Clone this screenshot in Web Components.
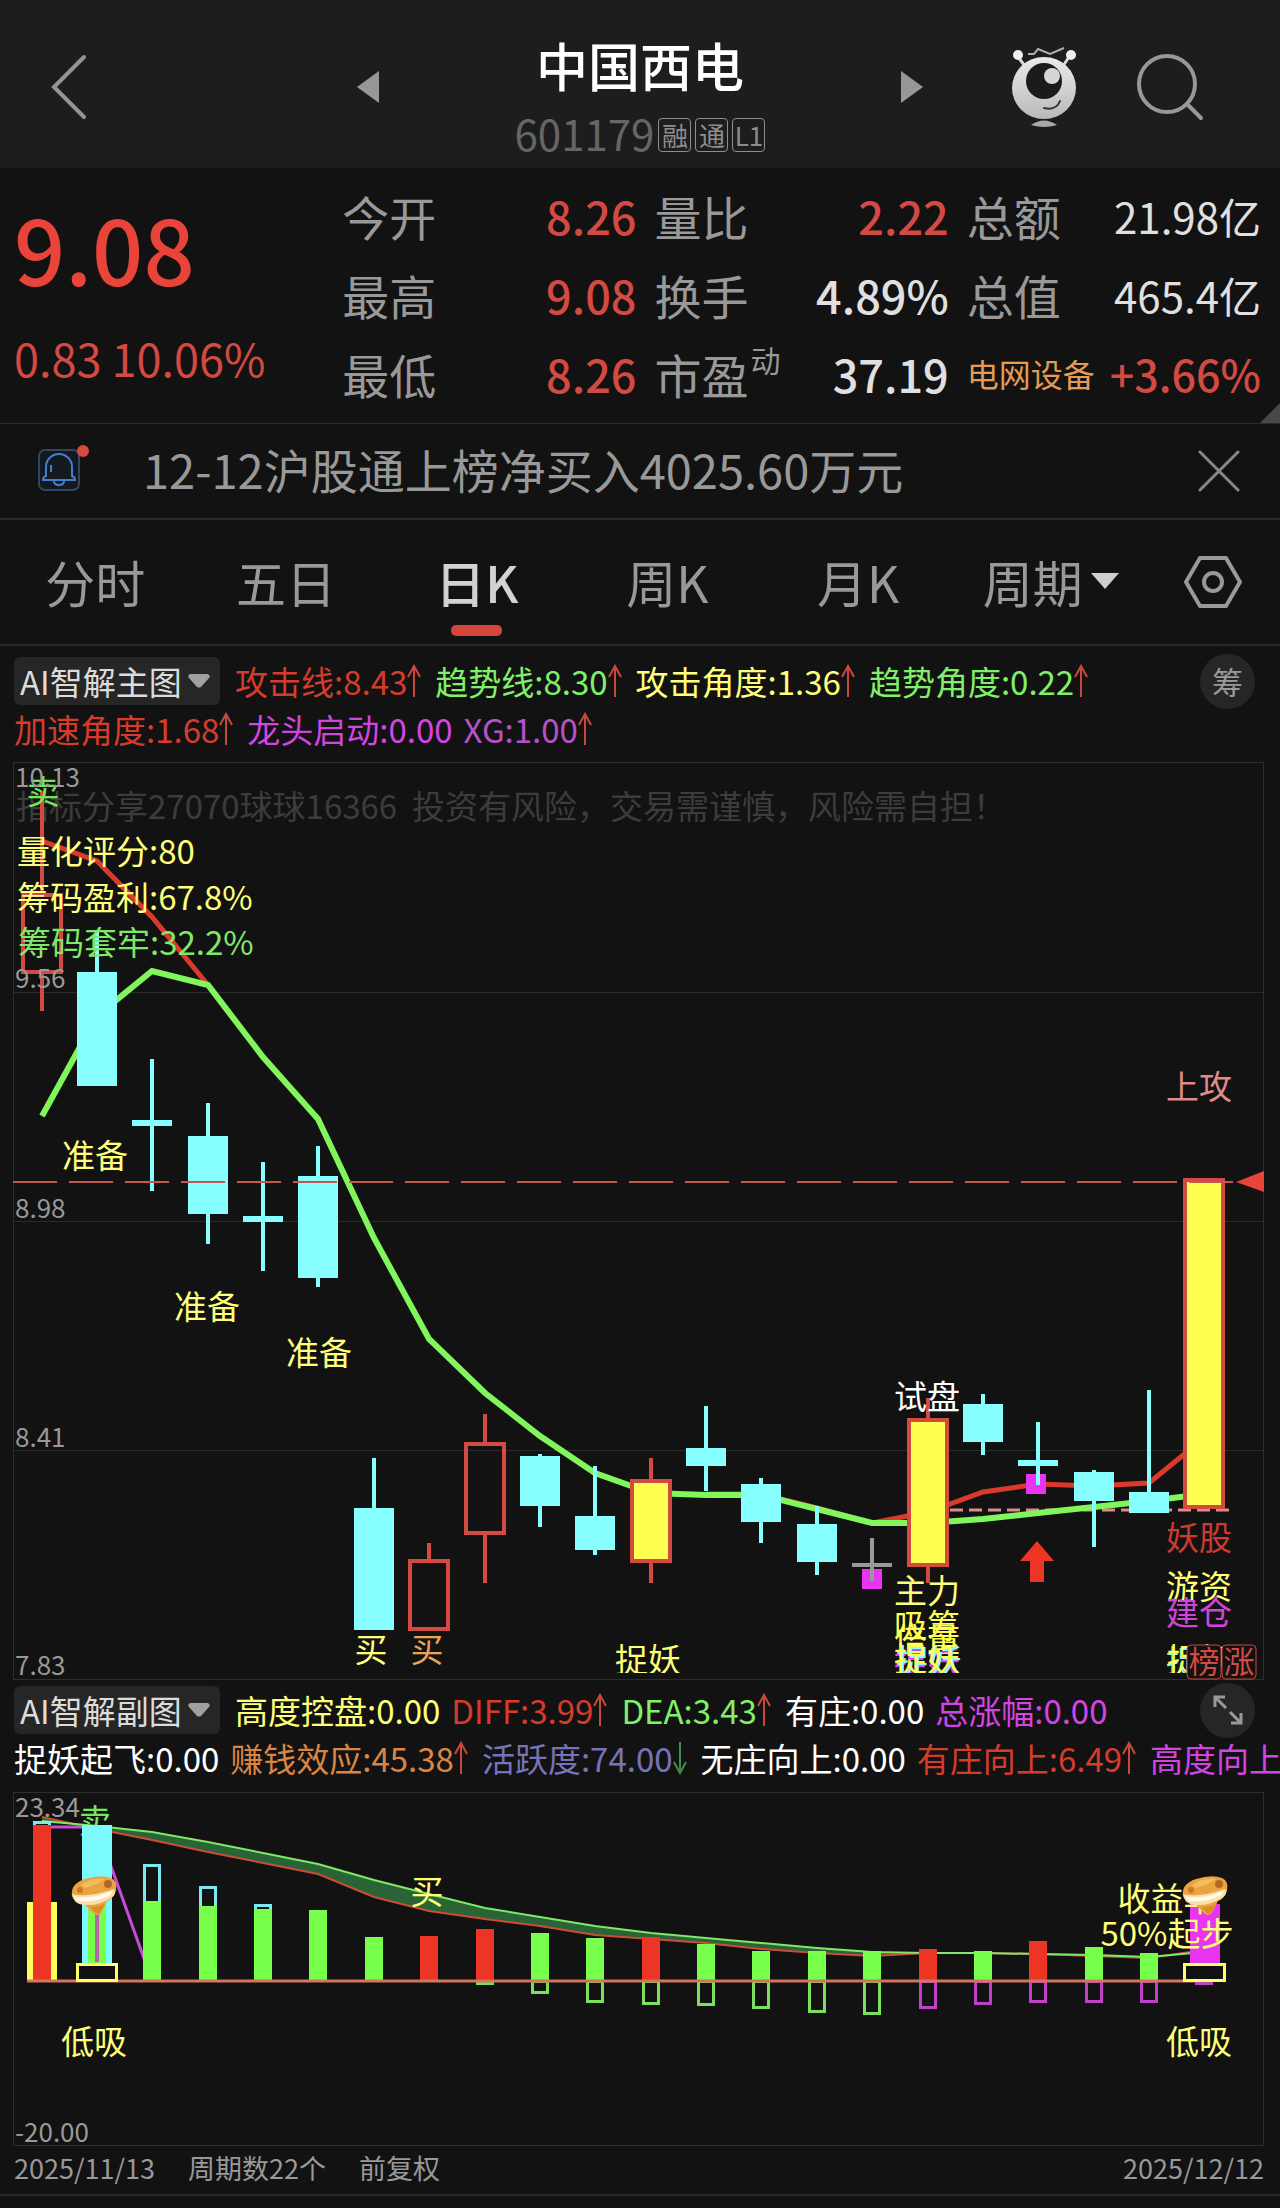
<!DOCTYPE html>
<html lang="zh-CN">
<head>
<meta charset="utf-8">
<meta name="viewport" content="width=device-width, initial-scale=1">
<title>中国西电 601179</title>
<style>
  html {
    background: #121212;
  }

  body {
    margin: 0;
    background: #121212;
    color: #e0e0e0;
    font-family: "Noto Sans CJK SC", "Noto Sans", sans-serif;
    --red: #d24a41;
    --grey: #999;
    --line: #2a2a2a;
    overflow-x: hidden;
  }
</style>
</head>
<body>
<stock-page></stock-page>

<script>
class BaseElement extends HTMLElement {
  constructor() {
    super()
    this.attachShadow({ mode: "open" })
    this.shadowRoot.innerHTML = `<style>
      :host { display: block; box-sizing: border-box; }
      * { box-sizing: border-box; }
      button, select, a { font: inherit; color: inherit; background: none; border: 0; padding: 0; margin: 0; text-decoration: none; cursor: pointer; }
      select { appearance: none; outline: none; }
      svg { display: block; }
    </style>${this.css}${this.html}`
  }

  get css() { return '' }
  get html() { return '<slot></slot>' }
}

customElements.define('stock-header', class extends BaseElement {
  get css() {
    return /*html*/`
      <style>
        header {
          display: grid;
          grid-template-columns: 3fr 4fr 3fr;
          min-height: 168px;
          background: #1d1d1d;
        }
        .side { display: flex; align-items: center; padding-top: 6px; }
        .left { justify-content: space-between; padding-left: 50px; padding-right: 5px; }
        .right { padding-left: 5px; padding-right: 76px; }
        .robot { margin-left: auto; margin-right: 59px; }
        .middle { padding-top: 33px; text-align: center; }
        h1 { margin: 0; font-size: 52px; line-height: 64px; font-weight: 500; color: #fff; }
        .code {
          display: flex;
          justify-content: center;
          align-items: center;
          gap: 4px;
          margin-top: 19px;
          font-size: 42px;
          line-height: 34px;
          color: #666;
        }
        .number { padding-bottom: 4px; }
        .tag {
          width: 33px;
          height: 34px;
          border: 1px solid #8e8e8e;
          border-radius: 4px;
          font-size: 26px;
          line-height: 31px;
          color: #8e8e8e;
        }
      </style>
    `
  }

  get html() {
    return /*html*/`
      <header>
        <div class="side left">
          <button aria-label="返回">
            <svg width="38" height="66" viewBox="0 0 38 66" fill="none" stroke="#949494" stroke-width="4" stroke-linecap="round"><path d="M34 3 4 33l30 30"/></svg>
          </button>
          <button aria-label="上一只">
            <svg width="22" height="34" viewBox="0 0 22 34" fill="#979797"><path d="M22 1v32L0 17z"/></svg>
          </button>
        </div>
        <div class="middle">
          <h1>中国西电</h1>
          <div class="code"><span class="number">601179</span><span class="tag">融</span><span class="tag">通</span><span class="tag">L1</span></div>
        </div>
        <div class="side right">
          <button aria-label="下一只">
            <svg width="22" height="34" viewBox="0 0 22 34" fill="#979797"><path d="M0 1v32l22-16z"/></svg>
          </button>
          <button class="robot" aria-label="智能助手">
            <svg width="66" height="82" viewBox="0 0 66 82">
              <defs>
                <linearGradient id="body" x1="0" y1="0" x2="0" y2="1">
                  <stop offset="0" stop-color="#ebebeb"/><stop offset="1" stop-color="#b9b9b9"/>
                </linearGradient>
              </defs>
              <g stroke="#d8d8d8" fill="none">
                <path d="M7 11l7 9M58 11l-6 9" stroke-width="3"/>
                <path d="M17 8h6l4-5 12 5 14-6" stroke-width="2" stroke="#b0b0b0"/>
              </g>
              <circle cx="7" cy="9" r="5" fill="#eee"/>
              <circle cx="60" cy="9" r="5" fill="#eee"/>
              <ellipse cx="33" cy="42" rx="32" ry="31" fill="url(#body)"/>
              <circle cx="33" cy="35" r="18" fill="#1b1b1b"/>
              <circle cx="41" cy="30" r="8" fill="#d6d6d6"/>
              <path d="M33 62q12 3 16-7" fill="none" stroke="#333" stroke-width="2" stroke-linecap="round"/>
              <path d="M20 79q13-9 26 0-13 4-26 0z" fill="#a8a8a8"/>
            </svg>
          </button>
          <button aria-label="搜索">
            <svg width="68" height="68" viewBox="0 0 68 68" fill="none" stroke="#989898" stroke-width="4" stroke-linecap="round"><circle cx="31" cy="31" r="28"/><path d="M51 51l14 14"/></svg>
          </button>
        </div>
      </header>
    `
  }
})

customElements.define('quote-panel', class extends BaseElement {
  get css() {
    return /*html*/`
      <style>
        :host { position: relative; border-bottom: 1px solid var(--line); }
        .panel {
          display: grid;
          grid-template-columns: 328fr 918fr;
          padding: 8px 19px 10px 14px;
          font-size: 47px;
          line-height: 79px;
        }
        .now { display: flex; flex-direction: column; gap: 36px; padding-top: 21px; color: var(--red); }
        .price { font-size: 90px; line-height: 100px; font-weight: 500; color: #e8443a; }
        .change { font-size: 45px; line-height: 50px; white-space: pre; }
        dl {
          display: grid;
          grid-auto-flow: column;
          grid-template-rows: repeat(3, 79px);
          grid-auto-columns: 1fr;
          column-gap: 18px;
          margin: 0;
        }
        dl div { display: flex; justify-content: space-between; white-space: nowrap; }
        dt { color: var(--grey); }
        dd { margin: 0; font-size: 45px; font-weight: 500; }
        .up { color: var(--red); }
        sup { font-size: 30px; line-height: 30px; vertical-align: 22px; margin-left: 2px; }
        .sector { font-size: 32px; color: #e39b55; }
        .amount { font-size: 42px; font-weight: 400; }
        .gain { font-size: 43px; }
        .corner { position: absolute; right: 0; bottom: 0; }
      </style>
    `
  }

  get html() {
    return /*html*/`
      <section class="panel">
        <div class="now">
          <div class="price">9.08</div>
          <div class="change">0.83 10.06%</div>
        </div>
        <dl>
          <div><dt>今开</dt><dd class="up">8.26</dd></div>
          <div><dt>最高</dt><dd class="up">9.08</dd></div>
          <div><dt>最低</dt><dd class="up">8.26</dd></div>
          <div><dt>量比</dt><dd class="up">2.22</dd></div>
          <div><dt>换手</dt><dd>4.89%</dd></div>
          <div><dt>市盈<sup>动</sup></dt><dd>37.19</dd></div>
          <div><dt>总额</dt><dd class="amount">21.98亿</dd></div>
          <div><dt>总值</dt><dd class="amount">465.4亿</dd></div>
          <div><dt class="sector">电网设备</dt><dd class="up gain">+3.66%</dd></div>
        </dl>
      </section>
      <svg class="corner" width="20" height="20" viewBox="0 0 20 20"><path d="M20 0v20H0z" fill="#484848"/></svg>
    `
  }
})

customElements.define('notice-bar', class extends BaseElement {
  get css() {
    return /*html*/`
      <style>
        :host {
          display: flex;
          align-items: center;
          height: 96px;
          padding: 0 40px 0 38px;
          border-bottom: 2px solid var(--line);
          font-size: 47px;
          line-height: 90px;
          color: var(--grey);
        }
        .bell { margin-right: 53px; margin-bottom: 6px; }
        a { flex: 1; padding-bottom: 4px; }
      </style>
    `
  }

  get html() {
    return /*html*/`
      <svg class="bell" width="52" height="48" viewBox="0 0 52 48" fill="none">
        <rect x="1" y="6" width="40" height="40" rx="6" stroke="#34465f" stroke-width="2" fill="#14181f"/>
        <g stroke="#3f7fce" stroke-width="2">
          <path d="M8 32V23a13 13 0 0 1 26 0v9q3 1 3 4H5q0-3 3-4zM13 21v7"/>
          <path d="M16 37q0 4 5 4t5-4"/>
        </g>
        <circle cx="45" cy="7" r="6" fill="#d24a41"/>
      </svg>
      <a href="#notice"><slot></slot></a>
      <button aria-label="关闭">
        <svg width="42" height="42" viewBox="0 0 42 42" stroke="#888" stroke-width="3" stroke-linecap="round"><path d="M2 2l38 38M40 2 2 40"/></svg>
      </button>
    `
  }
})

customElements.define('period-tabs', class extends BaseElement {
  get css() {
    return /*html*/`
      <style>
        nav {
          display: flex;
          height: 126px;
          border-bottom: 2px solid var(--line);
          font-size: 50px;
          line-height: 122px;
          color: var(--grey);
        }
        .tab { position: relative; flex: 191 1 0; padding-bottom: 2px; text-align: center; }
        .on { color: #d2d2d2; font-weight: 500; }
        .on::after {
          content: "";
          position: absolute;
          left: 50%;
          bottom: 8px;
          width: 51px;
          height: 11px;
          margin-left: -26px;
          border-radius: 5px;
          background: #d6443e;
        }
        .more { display: flex; align-items: center; justify-content: center; gap: 8px; padding-left: 2px; }
        .gear { flex: 134 1 0; display: flex; align-items: center; justify-content: center; }
      </style>
    `
  }

  get html() {
    return /*html*/`
      <nav>
        <button class="tab">分时</button>
        <button class="tab">五日</button>
        <button class="tab on" aria-current="true">日K</button>
        <button class="tab">周K</button>
        <button class="tab">月K</button>
        <label class="tab more">
          <select aria-label="周期"><option>周期</option></select>
          <svg width="28" height="16" viewBox="0 0 28 16" fill="#cfcfcf"><path d="M0 0h28L14 16z"/></svg>
        </label>
        <button class="gear" aria-label="设置">
          <svg width="58" height="52" viewBox="0 0 58 52" fill="none" stroke="#999" stroke-width="4" stroke-linejoin="round"><path d="M16 2h26l14 24-14 24H16L2 26z"/><circle cx="29" cy="26" r="9"/></svg>
        </button>
      </nav>
    `
  }
})

/* A name:value pair with an optional trend arrow */
customElements.define('legend-item', class extends BaseElement {
  get css() {
    return /*html*/`
      <style>
        :host { display: flex; align-items: center; flex: none; white-space: nowrap; }
        svg { display: none; fill: none; stroke-width: 2; }
        :host([trend]) svg { display: block; margin-right: 3px; }
        :host([trend="up"]) svg { stroke: #c9483c; }
        :host([trend="down"]) svg { stroke: #438c4c; transform: rotate(180deg); }
      </style>
    `
  }

  get html() {
    return /*html*/`<span><slot></slot></span><svg width="14" height="34" viewBox="0 0 14 34"><path d="M7 33V3M1 13 7 2l6 11"/></svg>`
  }
})

customElements.define('indicator-legend', class extends BaseElement {
  get css() {
    return /*html*/`
      <style>
        :host { padding: 11px 0 9px; font-size: 33px; line-height: 48px; overflow: hidden; }
        :host([compact]) { padding: 6px 0 10px; }
        .row { display: flex; align-items: center; height: 48px; padding: 0 25px 0 14px; }
        .items { display: flex; gap: 11px; }
        .pick {
          display: flex;
          align-items: center;
          gap: 6px;
          height: 48px;
          margin-right: 15px;
          padding: 0 10px 0 6px;
          border-radius: 6px;
          background: #262626;
          color: #dcdcdc;
        }
      </style>
    `
  }

  get html() {
    return /*html*/`
      <div class="row">
        <label class="pick">
          <select aria-label="指标"><option></option></select>
          <svg width="22" height="14" viewBox="0 0 22 14" fill="#a0a0a0"><path d="M2 0h18q3 2 1 4l-8 9q-2 1-4 0L1 4q-2-2 1-4z"/></svg>
        </label>
        <div class="items"><slot name="first"></slot></div>
        <slot name="action"></slot>
      </div>
      <div class="row"><div class="items"><slot></slot></div></div>
    `
  }

  connectedCallback() {
    this.shadowRoot.querySelector('option').textContent = this.getAttribute('name')
  }
})

/* ---- charts: both share one column grid of 22 days ---- */
const RED = '#d24a41'
const CYAN = '#88ffff'
const GREEN = '#80f55c'
const YELLOW = '#ffff52'
const TEXT_YELLOW = '#ffff7a'
const MAGENTA = '#e935f2'

const dayX = (i) => Math.round(41.5 + i * 55.38)

const rect = (x, y, w, h, fill, stroke, sw = 2) => stroke
  ? `<rect x="${x + sw / 2}" y="${y + sw / 2}" width="${w - sw}" height="${h - sw}" fill="${fill}" stroke="${stroke}" stroke-width="${sw}"/>`
  : `<rect x="${x}" y="${y}" width="${w}" height="${h}" fill="${fill}"/>`

const points = (ys, from = 0) => ys.map((y, i) => `${dayX(i + from)},${y}`).join(' ')

const polyline = (ys, color, width, from = 0) =>
  `<polyline points="${points(ys, from)}" fill="none" stroke="${color}" stroke-width="${width}"/>`

// y is the middle of the line of text
const label = (x, y, text, color, size = 33, anchor = 'middle') =>
  `<text x="${x}" y="${y + Math.round(size * 0.37)}" fill="${color}" font-size="${size}" text-anchor="${anchor}" xml:space="preserve">${text}</text>`

// [kind, high, top, bottom, low]
const candles = [
  ['hollow', 29, 131, 212, 249],
  ['down', 169, 210, 324, 324],
  ['cross', 297, 358, 364, 429],
  ['down', 341, 374, 452, 482],
  ['cross', 400, 454, 460, 509],
  ['down', 384, 414, 516, 525],
  ['down', 696, 746, 868, 868],
  ['hollow', 781, 797, 869, 869],
  ['hollow', 652, 680, 773, 821],
  ['down', 692, 694, 744, 765],
  ['down', 704, 754, 788, 793],
  ['strong', 696, 717, 801, 821],
  ['down', 644, 686, 704, 729],
  ['down', 716, 722, 760, 781],
  ['down', 744, 762, 800, 813],
  ['flat', 776, 801, 805, 819],
  ['strong', 636, 656, 805, 821],
  ['down', 632, 642, 680, 693],
  ['cross', 660, 698, 704, 723],
  ['down', 708, 710, 739, 785],
  ['down', 628, 730, 751, 751],
  ['strong', 416, 416, 747, 747],
]

const drawCandle = ([kind, high, top, bottom, low], i) => {
  const x = dayX(i)
  const color = { down: CYAN, cross: CYAN, flat: '#999', hollow: RED, strong: RED }[kind]
  const wick = (a, b) => b > a ? rect(x - 2, a, 4, b - a, color) : ''
  let body = rect(x - 20, top, 40, bottom - top, color)
  if (kind === 'hollow') body = rect(x - 21, top, 42, bottom - top, 'none', RED, 4)
  if (kind === 'strong') body = rect(x - 21, top, 42, bottom - top, YELLOW, RED, 4)
  return wick(high, top) + body + (kind === 'cross' || kind === 'flat' ? wick(top, bottom) : '') + wick(bottom, low)
}

customElements.define('k-chart', class extends BaseElement {
  get css() {
    return `<style>svg { width: 100%; height: auto; }</style>`
  }

  get html() {
    const trend = [354, 254, 209, 223, 295, 357, 476, 577, 631, 674, 711, 731, 733, 733, 747, 761, 761, 757, 751, 745, 739, 732]
    const grid = [230, 459, 688].map((y) => rect(14, y, 1249, 1, '#2a2a2a')).join('')
    const clip = (inner) => `<g clip-path="url(#plot)">${inner}</g>`
    return /*html*/`
      <svg viewBox="0 0 1280 918" role="img" aria-label="日K线图">
        <defs><clipPath id="plot"><rect x="0" y="0" width="1280" height="911"/></clipPath></defs>
        ${rect(13, 0, 1251, 918, 'none', '#2e2e2e', 1)}
        ${grid}
        ${label(16, 45, '指标分享27070球球16366  投资有风险，交易需谨慎，风险需自担！', '#3c3c3c', 33, 'start')}
        ${polyline([79, 99, 155, 223], '#d93a2b', 5)}
        ${polyline([732, 732, 746, 761, 750, 730, 722, 724, 721, 676], '#d93a2b', 5, 12)}
        <path d="M950 748h280" stroke="#e08a8a" stroke-width="3" stroke-dasharray="13 6"/>
        ${polyline(trend, GREEN, 6)}
        ${rect(862, 807, 20, 20, MAGENTA)}
        ${rect(1026, 712, 20, 20, MAGENTA)}
        ${candles.map(drawCandle).join('')}
        <path d="M13 420H1264" stroke="#c2574d" stroke-width="2" stroke-dasharray="44 12"/>
        <path d="M1236 420l28-11v21z" fill="#e8443a"/>
        <path d="M1037 779l17 20h-10v21h-14v-21h-10z" fill="#ec3524"/>

        ${label(43, 30, '卖', '#70e85a')}
        ${label(17, 90, '量化评分:80', TEXT_YELLOW, 33, 'start')}
        ${label(17, 136, '筹码盈利:67.8%', TEXT_YELLOW, 33, 'start')}
        ${label(18, 181, '筹码套牢:32.2%', '#80e868', 33, 'start')}
        ${label(95, 394, '准备', TEXT_YELLOW)}
        ${label(207, 545, '准备', TEXT_YELLOW)}
        ${label(319, 591, '准备', TEXT_YELLOW)}
        ${label(371, 888, '买', TEXT_YELLOW)}
        ${label(427, 888, '买', '#e8a555')}
        ${label(1199, 325, '上攻', '#e08a8a')}
        ${label(927, 635, '试盘', '#fff')}
        ${label(927, 829, '主力', TEXT_YELLOW)}
        ${label(1199, 776, '妖股', '#cf3a30')}
        ${label(1199, 825, '游资', TEXT_YELLOW)}
        ${label(1199, 851, '建仓', '#cf46d6')}
        ${clip(
          label(648, 898, '捉妖', TEXT_YELLOW) +
          label(927, 864, '吸筹', YELLOW) +
          label(927, 878, '倍量', YELLOW) +
          label(927, 901, '捉妖', MAGENTA) +
          label(929, 899, '捉妖', CYAN) +
          label(927, 897, '捉妖', YELLOW) +
          label(1199, 900, '捉妖', CYAN) +
          label(1200, 898, '捉妖', YELLOW)
        )}
        <g fill="#121212" stroke="#c9483c"><rect x="1187" y="883" width="34" height="34" rx="4"/><rect x="1222" y="883" width="34" height="34" rx="4"/></g>
        ${label(1204, 900, '榜', RED, 31)}
        ${label(1239, 900, '涨', RED, 31)}

        ${label(15, 15, '10.13', '#999', 26, 'start')}
        ${label(15, 216, '9.56', '#999', 26, 'start')}
        ${label(15, 446, '8.98', '#999', 26, 'start')}
        ${label(15, 675, '8.41', '#999', 26, 'start')}
        ${label(15, 903, '7.83', '#999', 26, 'start')}
      </svg>
    `
  }
})

// bar tops above the zero line; below is where the outline under it ends
const BAR_RED = '#ec3524'
const BAR_GREEN = '#78ff4c'
const bars = [
  { top: 33, color: BAR_RED, peak: 29 },
  { top: 112, color: BAR_GREEN },
  { top: 109, color: BAR_GREEN, peak: 72 },
  { top: 114, color: BAR_GREEN, peak: 94 },
  { top: 117, color: BAR_GREEN, peak: 112 },
  { top: 118, color: BAR_GREEN },
  { top: 145, color: BAR_GREEN },
  { top: 144, color: BAR_RED },
  { top: 137, color: BAR_RED, below: 192 },
  { top: 141, color: BAR_GREEN, below: 201 },
  { top: 146, color: BAR_GREEN, below: 210 },
  { top: 145, color: BAR_RED, below: 212 },
  { top: 152, color: BAR_GREEN, below: 213 },
  { top: 159, color: BAR_GREEN, below: 216 },
  { top: 159, color: BAR_GREEN, below: 220 },
  { top: 159, color: BAR_GREEN, below: 222 },
  { top: 157, color: BAR_RED, below: 216 },
  { top: 159, color: BAR_GREEN, below: 212 },
  { top: 149, color: BAR_RED, below: 210 },
  { top: 155, color: BAR_GREEN, below: 210 },
  { top: 161, color: BAR_GREEN, below: 210 },
]

customElements.define('sub-chart', class extends BaseElement {
  get css() {
    return `<style>svg { width: 100%; height: auto; }</style>`
  }

  get html() {
    const dea = [29, 34, 40, 50, 61, 72, 88, 102, 116, 125, 134, 141, 146, 151, 156, 160, 161, 161, 162, 163, 165, 160]
    const diff = [25, 37, 48, 60, 71, 82, 105, 119, 127, 134, 143, 147, 151, 157, 161, 164, 161, 161, 162, 164, 166, 158]
    const area = points(dea) + ' ' + points(diff).split(' ').reverse().join(' ')
    const zero = 190
    const drawBar = ({ top, color, peak, below }, i) => {
      const x = dayX(i) - 9
      return (below ? rect(x, zero - 2, 18, below - zero + 3, 'none', i < 16 ? '#7ae05e' : '#c040c8', 3) : '') +
        (peak ? rect(x, peak, 18, top - peak + 3, '#121212', '#7ce8f0', 3) : '') +
        rect(x, top, 18, zero - top, color)
    }
    const pan = (x) => /*html*/`
      <g transform="translate(${x} 84)">
        <path d="M1 20Q-1 8 14 3 30-2 40 2q7 3 5 13-3 8-9 10L30 37q-4 4-8 0L13 28Q3 26 1 20z" fill="#e9a441"/>
        <path d="M10 9q12-8 24-6-8 6-20 9z" fill="#f3bd5c"/>
        <path d="M1 18q16 4 42-5 3 5-3 9-12 8-27 7-11-1-12-11z" fill="#fbe0a4"/>
        <path d="M3 20q16 4 38-5l-1 4q-14 8-34 6z" fill="#fffaf0"/>
        <path d="M20 31q8 0 14-3l-5 9q-3 2-5-1z" fill="#dc8a2a"/>
        <circle cx="37" cy="8" r="4" fill="#b5672a"/><circle cx="9" cy="14" r="3" fill="#c97a28"/>
      </g>`
    return /*html*/`
      <svg viewBox="0 0 1280 354" role="img" aria-label="副图指标">
        ${rect(13, 0, 1251, 354, 'none', '#2e2e2e', 1)}
        ${label(95, 29, '卖', '#70e85a')}
        <polygon points="${area}" fill="#2a6436"/>
        ${polyline(diff, '#cc4c38', 2)}
        ${polyline(dea, '#80e868', 2)}
        <path d="M51 35h46l55 154" fill="none" stroke="#c64bd6" stroke-width="3"/>
        ${rect(27, 110, 30, 80, '#ffff5c')}
        ${rect(82, 33, 30, 138, '#7cfbff')}
        ${bars.map(drawBar).join('')}
        ${rect(95, 118, 4, 52, '#b565a8')}
        ${rect(1190, 112, 30, 60, MAGENTA)}
        <path d="M27 189H1204" stroke="#d2755c" stroke-width="3"/>
        ${rect(1195, 188, 18, 5, '#c040c8')}
        ${rect(76, 171, 42, 19, '#121212', '#ffff66', 3)}
        ${rect(1183, 171, 43, 19, '#121212', '#ffff66', 3)}

        ${label(427, 100, '买', TEXT_YELLOW)}
        ${label(94, 250, '低吸', TEXT_YELLOW)}
        ${label(1199, 250, '低吸', TEXT_YELLOW)}
        ${label(1167, 107, '收益率', TEXT_YELLOW)}
        ${label(1167, 142, '50%起步', TEXT_YELLOW)}
        ${pan(71)}
        ${pan(1182)}
        ${label(15, 15, '23.34', '#999', 26, 'start')}
        ${label(15, 340, '-20.00', '#999', 26, 'start')}
      </svg>
    `
  }
})

customElements.define('chart-footer', class extends BaseElement {
  get css() {
    return /*html*/`
      <style>
        footer {
          display: flex;
          gap: 33px;
          height: 50px;
          padding: 0 16px 0 14px;
          border-bottom: 2px solid var(--line);
          font-size: 27px;
          line-height: 43px;
          color: var(--grey);
        }
        .end { margin-left: auto; }
      </style>
    `
  }

  get html() {
    return /*html*/`
      <footer>
        <time>2025/11/13</time><span>周期数22个</span><span>前复权</span><time class="end">2025/12/12</time>
      </footer>
    `
  }
})

customElements.define('stock-page', class extends BaseElement {
  get css() {
    return /*html*/`
      <style>
        .red { color: #d63c2c; }
        .green { color: #80f068; }
        .yellow { color: #ffff7a; }
        .magenta { color: #d345e0; }
        .violet { color: #b552c8; }
        .orange { color: #d98545; }
        .blue { color: #7674b8; }
        .white { color: #fff; }
        .round {
          display: flex;
          flex: none;
          align-items: center;
          justify-content: center;
          width: 55px;
          height: 55px;
          margin-left: auto;
          border-radius: 50%;
          background: #262626;
          color: #999;
          font-size: 31px;
        }
      </style>
    `
  }

  get html() {
    return /*html*/`
      <stock-header></stock-header>
      <main>
        <quote-panel></quote-panel>
        <notice-bar>12-12沪股通上榜净买入4025.60万元</notice-bar>
        <period-tabs></period-tabs>

        <indicator-legend name="AI智解主图">
          <legend-item slot="first" class="red" trend="up">攻击线:8.43</legend-item>
          <legend-item slot="first" class="green" trend="up">趋势线:8.30</legend-item>
          <legend-item slot="first" class="yellow" trend="up">攻击角度:1.36</legend-item>
          <legend-item slot="first" class="green" trend="up">趋势角度:0.22</legend-item>
          <button class="round" slot="action">筹</button>
          <legend-item class="red" trend="up">加速角度:1.68</legend-item>
          <legend-item class="magenta">龙头启动:0.00</legend-item>
          <legend-item class="violet" trend="up">XG:1.00</legend-item>
        </indicator-legend>
        <k-chart></k-chart>

        <indicator-legend name="AI智解副图" compact>
          <legend-item slot="first" class="yellow">高度控盘:0.00</legend-item>
          <legend-item slot="first" class="red" trend="up">DIFF:3.99</legend-item>
          <legend-item slot="first" class="green" trend="up">DEA:3.43</legend-item>
          <legend-item slot="first" class="white">有庄:0.00</legend-item>
          <legend-item slot="first" class="magenta">总涨幅:0.00</legend-item>
          <button class="round" slot="action" aria-label="展开">
            <svg width="30" height="30" viewBox="0 0 30 30" fill="none" stroke="#999" stroke-width="3"><path d="M2 12V2h10M2 2l11 11M28 18v10H18M28 28 17 17"/></svg>
          </button>
          <legend-item class="white">捉妖起飞:0.00</legend-item>
          <legend-item class="orange" trend="up">赚钱效应:45.38</legend-item>
          <legend-item class="blue" trend="down">活跃度:74.00</legend-item>
          <legend-item class="white">无庄向上:0.00</legend-item>
          <legend-item class="red" trend="up">有庄向上:6.49</legend-item>
          <legend-item class="magenta">高度向上</legend-item>
        </indicator-legend>
        <sub-chart></sub-chart>
        <chart-footer></chart-footer>
      </main>
    `
  }
})
</script>
</body>
</html>
